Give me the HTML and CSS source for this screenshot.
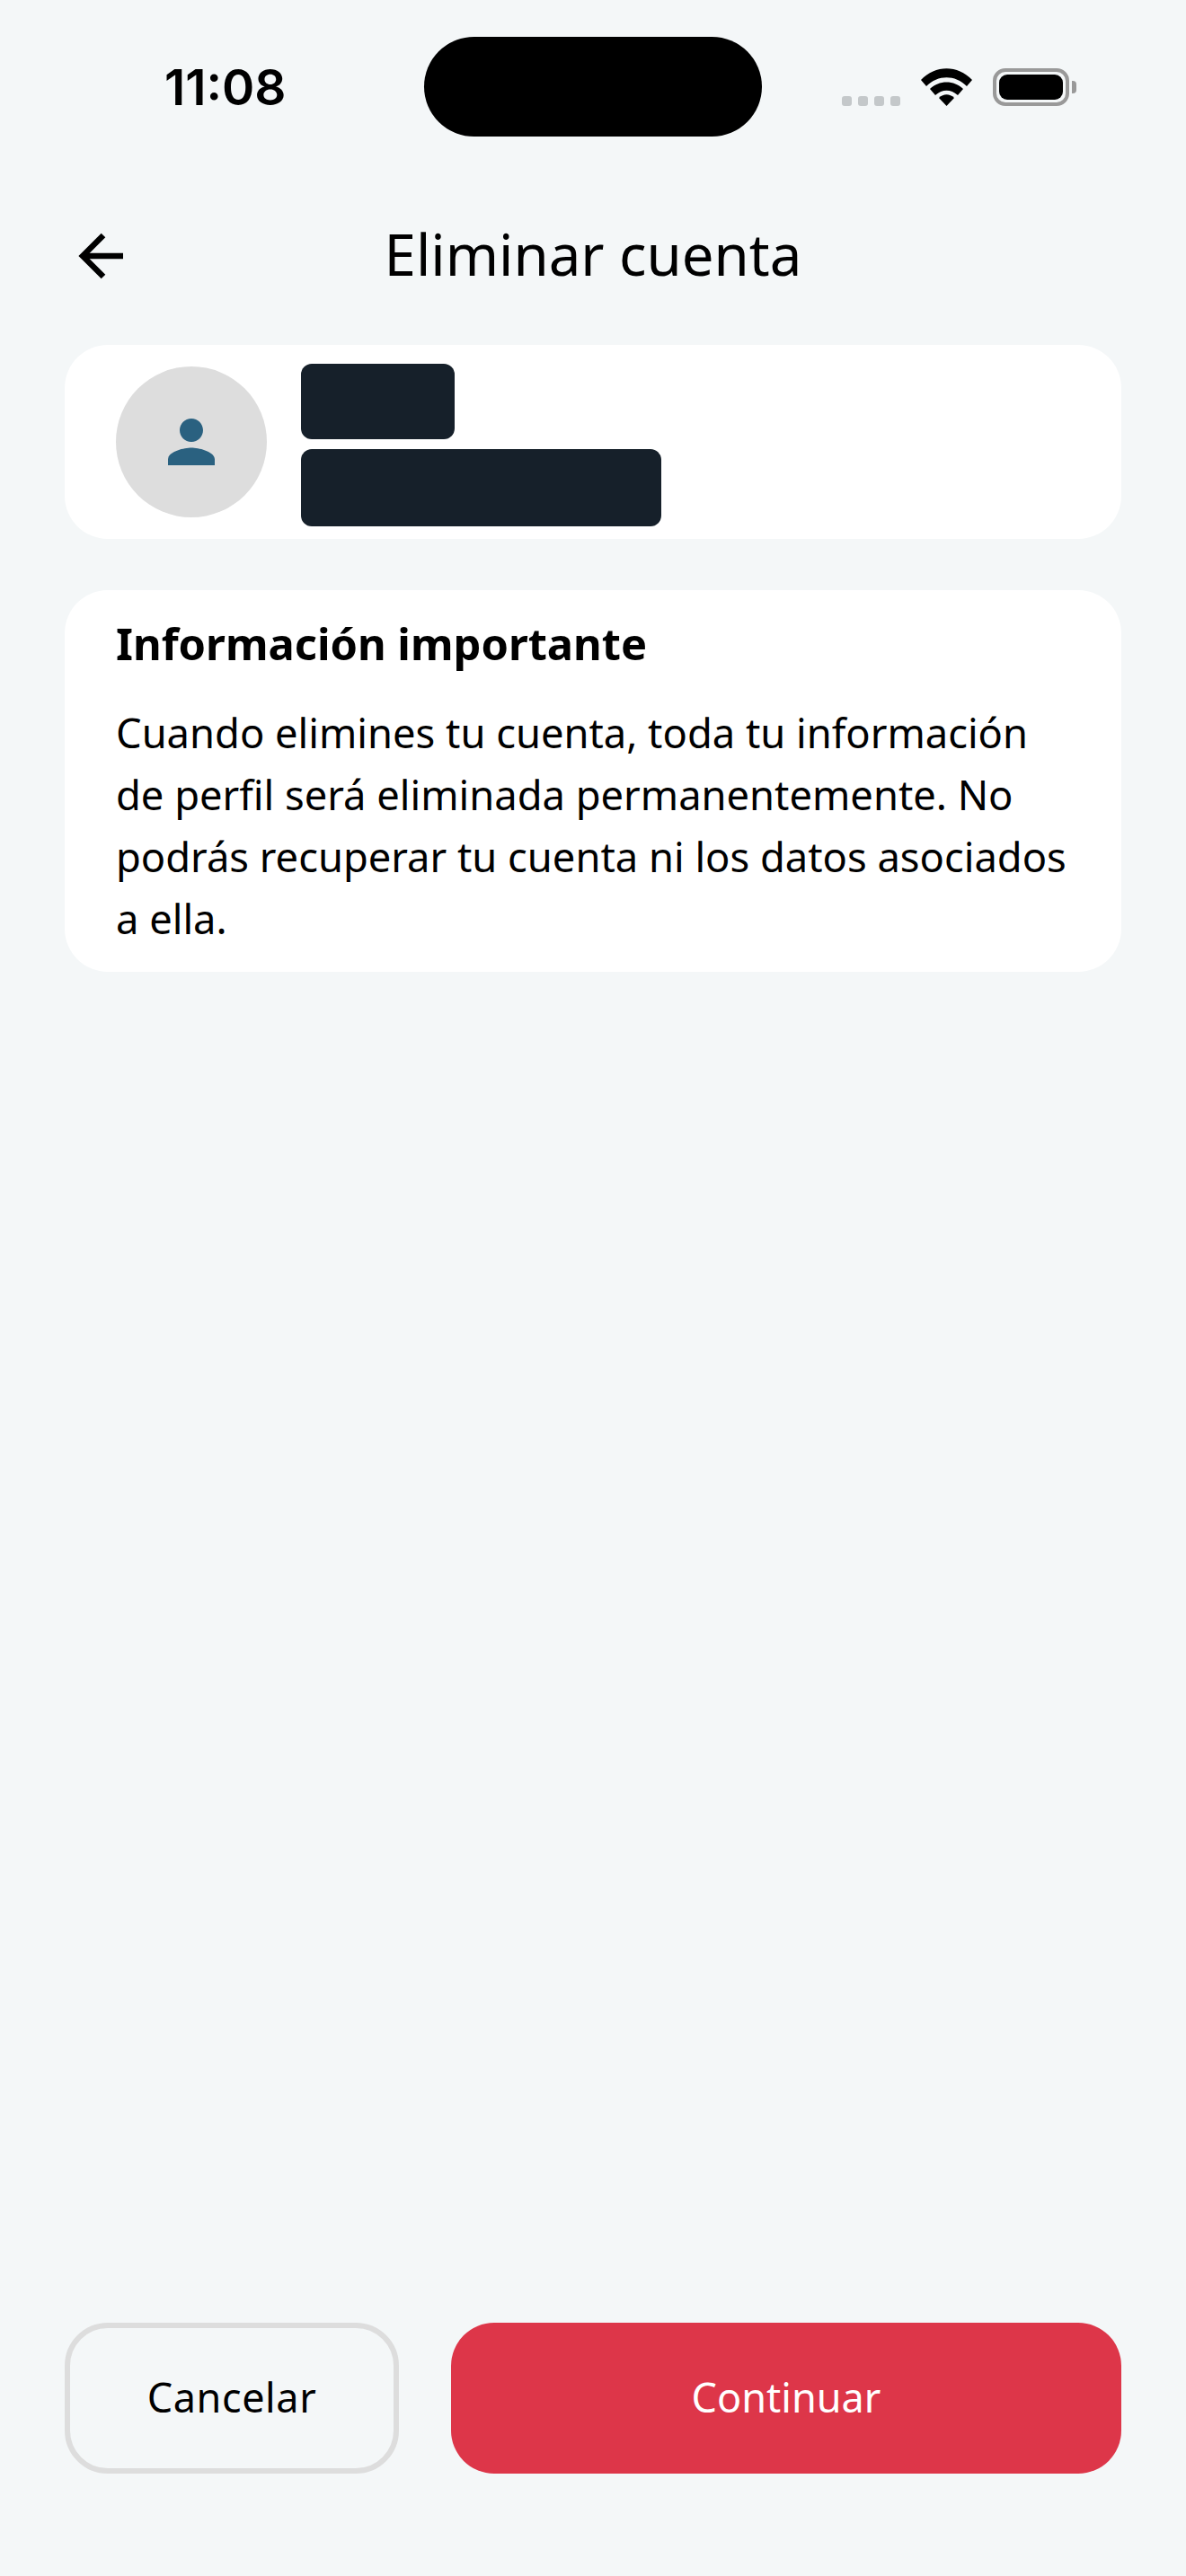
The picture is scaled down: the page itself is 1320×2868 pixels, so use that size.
FILE: index.html
```html
<!DOCTYPE html>
<html lang="es">
<head>
    <meta charset="UTF-8">
    <meta name="viewport" content="width=device-width, initial-scale=1.0">
    <title>Eliminar cuenta</title>
    <link rel="stylesheet" href="styles.css">
</head>
<body>
    <div class="status-bar">
        <span class="time">11:08</span>
        <div class="island"></div>
        <div class="status-icons">
            <div class="signal"><i></i><i></i><i></i><i></i></div>
            <svg class="wifi" width="57" height="42" viewBox="0 0 57 42">
                <path d="M0 13 C16 -4 41 -4 57 13 L51 20 C38 7 19 7 6 20 Z"/>
                <path d="M10 23 C20 13 37 13 47 23 L41 30 C33 23 24 23 16 30 Z"/>
                <path d="M20 33 C25 28 32 28 37 33 L28.500 42 Z"/>
            </svg>
            <div class="battery"><div class="battery-level"></div></div>
            <div class="battery-cap"></div>
        </div>
    </div>

    <div class="header">
        <button class="back" aria-label="Volver">
            <svg width="54" height="54" viewBox="0 0 54 54" fill="none" stroke="#000" stroke-width="6.500">
                <path d="M52 27 H7"/>
                <path d="M30 4 L7 27 L30 50"/>
            </svg>
        </button>
        <h1>Eliminar cuenta</h1>
    </div>

    <div class="card profile">
        <div class="avatar">
            <svg width="78" height="78" viewBox="0 0 24 24" fill="#2a6180">
                <path d="M12 12c2.210 0 4-1.790 4-4s-1.790-4-4-4-4 1.790-4 4 1.790 4 4 4zm0 2c-2.670 0-8 1.340-8 4v2h16v-2c0-2.660-5.330-4-8-4z"/>
            </svg>
        </div>
        <div class="profile-info">
            <div class="redacted name"></div>
            <div class="redacted email"></div>
        </div>
    </div>

    <div class="card info">
        <h2>Información importante</h2>
        <p>Cuando elimines tu cuenta, toda tu información de perfil será eliminada permanentemente. No podrás recuperar tu cuenta ni los datos asociados a ella.</p>
    </div>

    <div class="actions">
        <button class="btn cancel">Cancelar</button>
        <button class="btn continue">Continuar</button>
    </div>
</body>
</html>
```

FILE: styles.css
```css
body {
    display: flex;
    flex-direction: column;
    height: 2868px;
    margin: 0;
    font-family: "Noto Sans", sans-serif;
    background-color: #f4f7f8;
    color: #000;
    overflow: hidden;
}

/* Status bar */
.status-bar {
    display: flex;
    align-items: center;
    height: 111px;
    margin-top: 41px;
    padding-left: 183px;
}

.time {
    width: 289px;
    padding-top: 2px;
    font-family: Inter, sans-serif;
    font-size: 55px;
    font-weight: 600;
    line-height: 1;
}

.island {
    width: 376px;
    height: 111px;
    border-radius: 56px;
    background-color: #000;
}

.status-icons {
    display: flex;
    align-items: flex-end;
    height: 42px;
    margin-left: 89px;
}

.signal {
    display: flex;
    gap: 7px;
    margin-right: 23px;
}

.signal i {
    width: 11px;
    height: 11px;
    border-radius: 3px;
    background-color: #c4c8ca;
}

.wifi {
    margin-right: 23px;
}

.battery {
    box-sizing: border-box;
    width: 85px;
    height: 42px;
    padding: 3px;
    border: 4px solid #999;
    border-radius: 14px;
}

.battery-level {
    height: 100%;
    border-radius: 9px;
    background-color: #000;
}

.battery-cap {
    align-self: center;
    width: 5px;
    height: 14px;
    margin-left: 3px;
    border-radius: 0 4px 4px 0;
    background-color: #999;
}

/* Header */
.header {
    position: relative;
    display: flex;
    justify-content: center;
    align-items: center;
    height: 96px;
    margin-top: 84px;
}

.header h1 {
    margin: 0 0 4px;
    font-size: 63.500px;
    font-weight: 400;
}

.back {
    position: absolute;
    left: 85px;
    top: 22px;
    padding: 0;
    border: none;
    background: none;
}

/* Cards */
.card {
    box-sizing: border-box;
    margin: 0 72px;
    border-radius: 48px;
    background-color: #fff;
}

.profile {
    display: flex;
    align-items: center;
    height: 216px;
    margin-top: 52px;
    padding-left: 57px;
}

.avatar {
    display: flex;
    justify-content: center;
    align-items: center;
    width: 168px;
    height: 168px;
    border-radius: 50%;
    background-color: #dddddd;
}

.profile-info {
    display: flex;
    flex-direction: column;
    gap: 11px;
    margin-top: 6px;
    margin-left: 38px;
}

.redacted {
    border-radius: 12px;
    background-color: #16202a;
}

.name {
    width: 171px;
    height: 84px;
}

.email {
    width: 401px;
    height: 86px;
}

.info {
    margin-top: 57px;
    height: 425px;
    padding: 26px 57px 0;
}

.info h2 {
    margin: 0;
    font-size: 48.800px;
    font-weight: 700;
    line-height: 66px;
}

.info p {
    margin: 32px 0 0;
    font-size: 45.300px;
    line-height: 69px;
}

/* Bottom buttons */
.actions {
    display: flex;
    gap: 58px;
    margin: auto 72px 114px;
}

.btn {
    height: 168px;
    padding-bottom: 5px;
    border-radius: 48px;
    font-family: "Noto Sans", sans-serif;
    font-size: 45px;
}

.cancel {
    width: 372px;
    border: 6px solid #dddddd;
    background: none;
    color: #000;
    letter-spacing: 0.600px;
}

.continue {
    flex: 1;
    border: none;
    background-color: #dd3649;
    color: #fff;
}
```
